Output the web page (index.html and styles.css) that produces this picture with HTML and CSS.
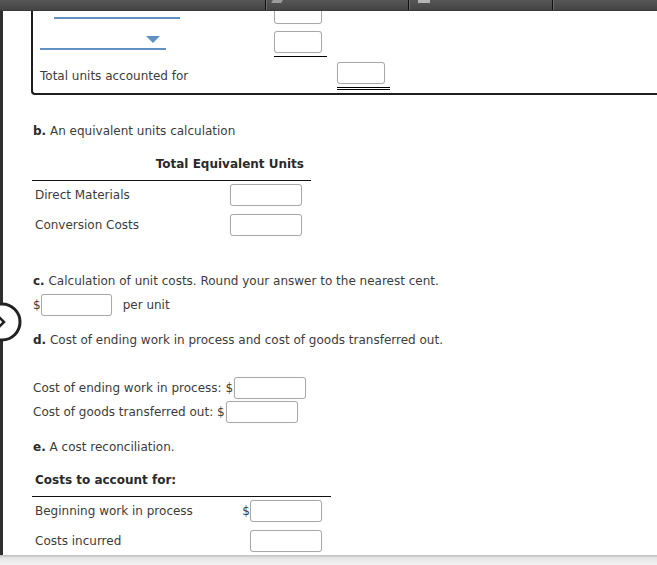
FILE: index.html
```html
<!DOCTYPE html>
<html lang="en">
<head>
    <meta charset="UTF-8">
    <meta name="viewport" content="width=device-width, initial-scale=1.0">
    <title>Process costing worksheet</title>
    <link rel="stylesheet" href="styles.css">
</head>
<body>
    <div class="toolbar">
        <span class="tool-sep sep1"></span>
        <span class="tool-icon icon1"></span>
        <span class="tool-sep sep2"></span>
        <span class="tool-icon icon2"></span>
        <span class="tool-sep sep3"></span>
    </div>

    <div class="page">
        <div class="units-box">
            <div class="ub-row row1">
                <div class="ub-label"><span class="blank-line indent"></span></div>
                <div class="ub-cell"><input type="text" class="ans ans-sm"></div>
                <div class="ub-cell"></div>
            </div>
            <div class="ub-row row2">
                <div class="ub-label"><span class="blank-line select"><span class="caret"></span></span></div>
                <div class="ub-cell"><div class="sum-cell single"><input type="text" class="ans ans-sm"></div></div>
                <div class="ub-cell"></div>
            </div>
            <div class="ub-row row3">
                <div class="ub-label total-label">Total units accounted for</div>
                <div class="ub-cell"></div>
                <div class="ub-cell"><div class="sum-cell double"><input type="text" class="ans ans-sm"></div></div>
            </div>
        </div>

        <p class="q-text q-b"><b>b.</b> An equivalent units calculation</p>
        <div class="eq-table">
            <div class="eq-head">Total Equivalent Units</div>
            <div class="eq-row">
                <span>Direct Materials</span>
                <input type="text" class="ans">
            </div>
            <div class="eq-row">
                <span>Conversion Costs</span>
                <input type="text" class="ans">
            </div>
        </div>

        <p class="q-text q-c"><b>c.</b> Calculation of unit costs. Round your answer to the nearest cent.</p>
        <div class="unit-row">
            <span>$</span><input type="text" class="ans"><span class="per-unit">per unit</span>
        </div>

        <p class="q-text q-d"><b>d.</b> Cost of ending work in process and cost of goods transferred out.</p>
        <div class="cost-lines">
            <div class="cost-line"><span>Cost of ending work in process: $</span><input type="text" class="ans"></div>
            <div class="cost-line"><span>Cost of goods transferred out: $</span><input type="text" class="ans"></div>
        </div>

        <p class="q-text q-e"><b>e.</b> A cost reconciliation.</p>
        <div class="recon-table">
            <div class="recon-head">Costs to account for:</div>
            <div class="recon-row">
                <span>Beginning work in process</span>
                <span class="money"><span class="dollar">$</span><input type="text" class="ans"></span>
            </div>
            <div class="recon-row">
                <span>Costs incurred</span>
                <span class="money"><input type="text" class="ans"></span>
            </div>
        </div>
    </div>

    <div class="side-toggle">
        <svg width="40" height="40" viewBox="0 0 40 40">
            <circle cx="20" cy="20" r="18" fill="#fff" stroke="#222" stroke-width="3"/>
            <path d="M16 14 L22 20 L16 26" fill="none" stroke="#222" stroke-width="2.5"/>
        </svg>
    </div>

    <div class="bottom-bar"></div>
</body>
</html>
```

FILE: styles.css
```css
body {
    margin: 0;
    width: 657px;
    height: 565px;
    overflow: hidden;
    position: relative;
    background-color: #fff;
    font-family: "DejaVu Sans", Verdana, sans-serif;
    font-size: 12px;
    color: #3c3c3c;
}
.page {
    border-left: 3px solid #2e2e2e;
    min-height: 565px;
    box-sizing: border-box;
}

/* toolbar across the top, drawn over the content */
.toolbar {
    position: absolute;
    top: 0;
    left: 0;
    right: 0;
    height: 10px;
    background: linear-gradient(#575757, #444);
    border-bottom: 1px solid #3a3a3a;
    z-index: 2;
}
.tool-sep {
    position: absolute;
    top: 0;
    width: 1px;
    height: 10px;
    background-color: #111;
    box-shadow: 1px 0 0 #6a6a6a;
}
.sep1 { left: 265px; }
.sep2 { left: 408px; }
.sep3 { left: 552px; }
.tool-icon {
    position: absolute;
    top: 0;
    height: 3px;
    background-color: #9a9a9a;
}
.icon1 { left: 272px; width: 10px; transform: skewX(-30deg); }
.icon2 { left: 418px; width: 12px; background-color: #b5b5b5; }

/* inputs */
.ans {
    display: block;
    width: 72px;
    height: 22px;
    box-sizing: border-box;
    border: 1px solid #a8a8a8;
    border-radius: 3px;
    box-shadow: 0 0 1px rgba(0,0,0,0.15);
    background-color: #fff;
    padding: 0 4px;
    margin: 0;
    font: inherit;
}
.ans-sm {
    width: 48px;
}

/* part a, unit reconciliation box (scrolled up) */
.units-box {
    margin-left: 28px;
    border-left: 2px solid #1e1e1e;
    border-bottom: 2px solid #1e1e1e;
    border-bottom-left-radius: 4px;
    padding-left: 7px;
    padding-bottom: 3px;
}
.ub-row {
    display: grid;
    grid-template-columns: 234px 63px 60px;
    align-items: start;
}
.row1 { height: 28px; }
.row2 { height: 30px; }
.row3 { height: 32px; }
.row1 .ub-cell:nth-child(2) { padding-top: 2px; }
.row2 .ub-cell:nth-child(2) { padding-top: 3px; }
.row3 .ub-cell:nth-child(3) { padding-top: 4px; }
.blank-line {
    display: flex;
    justify-content: flex-end;
    width: 126px;
    border-bottom: 2px solid #5f91c3;
}
.blank-line.indent {
    margin-left: 14px;
    height: 17px;
}
.blank-line.select {
    height: 20px;
    padding-right: 6px;
    width: 120px;
}
.caret {
    margin-top: 8px;
    width: 0;
    height: 0;
    border-left: 7px solid transparent;
    border-right: 7px solid transparent;
    border-top: 7px solid #5f91c3;
}
.sum-cell {
    width: 53px;
    padding-bottom: 3px;
}
.sum-cell.single {
    border-bottom: 1px solid #000;
}
.sum-cell.double {
    border-bottom: 3px double #000;
}
.total-label {
    padding-top: 10px;
    line-height: 16px;
}

/* question text */
.q-text {
    margin: 0 0 0 30px;
    line-height: 16px;
}
.q-text b {
    color: #2a2a2a;
}
.q-b { margin-top: 28px; }
.q-c { margin-top: 32px; }
.q-d { margin-top: 16px; }
.q-e { margin-top: 15px; }

/* part b */
.eq-table {
    margin: 17px 0 0 29px;
    width: 279px;
}
.eq-head {
    text-align: right;
    font-weight: bold;
    color: #2a2a2a;
    line-height: 16px;
    padding: 0 7px 8px 0;
    border-bottom: 1px solid #111;
}
.eq-row {
    display: flex;
    justify-content: space-between;
    align-items: center;
    padding: 3px 9px 5px 3px;
}

/* part c */
.unit-row {
    display: flex;
    align-items: center;
    margin: 5px 0 0 30px;
}
.unit-row .ans {
    width: 71px;
}
.per-unit {
    margin-left: 11px;
}

/* part d */
.cost-lines {
    margin: 28px 0 0 30px;
}
.cost-line {
    display: flex;
    align-items: center;
    height: 24px;
}
.cost-line span {
    margin-right: 1px;
}

/* part e */
.recon-table {
    margin: 17px 0 0 29px;
    width: 299px;
}
.recon-head {
    font-weight: bold;
    color: #2a2a2a;
    line-height: 16px;
    padding: 0 0 8px 3px;
    border-bottom: 1px solid #111;
}
.recon-row {
    display: flex;
    justify-content: space-between;
    align-items: center;
    padding: 3px 9px 5px 3px;
}
.money {
    display: flex;
    align-items: center;
}

/* collapsed side panel handle */
.side-toggle {
    position: absolute;
    left: -18px;
    top: 302px;
    width: 40px;
    height: 40px;
    z-index: 3;
}

/* bottom edge of the frame */
.bottom-bar {
    position: absolute;
    left: 0;
    right: 0;
    bottom: 0;
    height: 10px;
    background: linear-gradient(#bcbcbc, #e6e6e6 3px, #f3f3f3);
    z-index: 2;
}
```
